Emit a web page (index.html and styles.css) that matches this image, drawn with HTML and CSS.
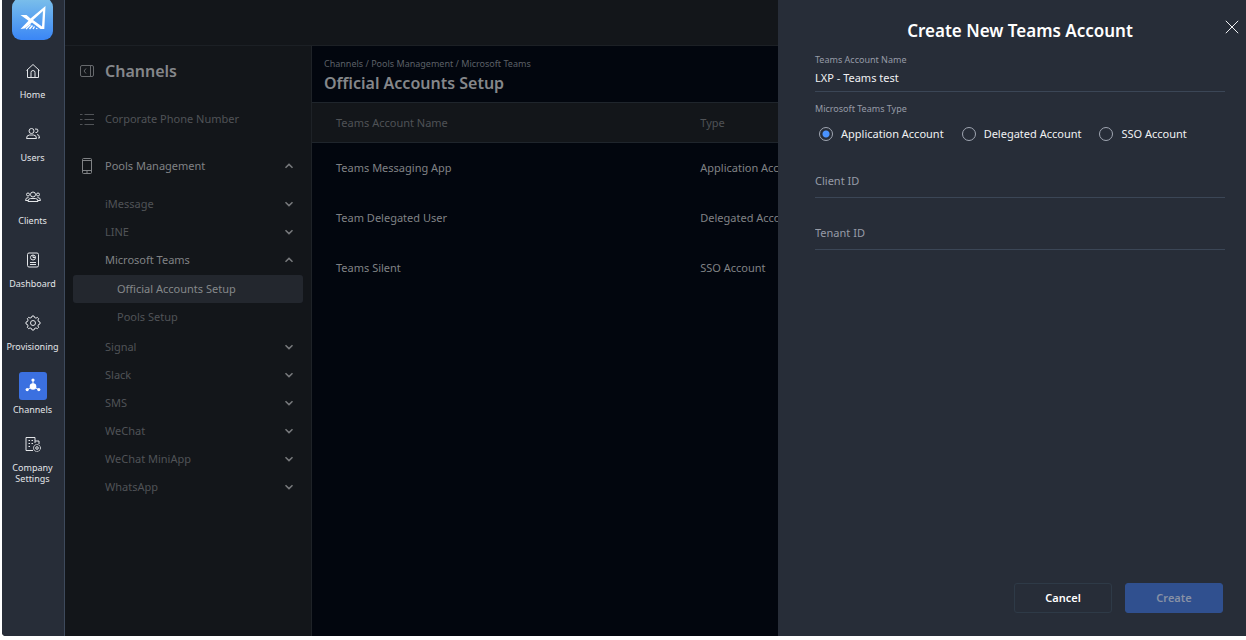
FILE: index.html
```html
<!DOCTYPE html>
<html lang="en">
<head>
<meta charset="utf-8">
<title>Official Accounts Setup</title>
<link rel="stylesheet" href="styles.css">
</head>
<body>
<svg class="sprite" aria-hidden="true">
  <symbol id="down" viewBox="0 0 10 6"><path d="M1.500 1.200 5 4.600 8.500 1.200"/></symbol>
  <symbol id="up" viewBox="0 0 10 6"><path d="M1.500 4.800 5 1.400 8.500 4.800"/></symbol>
</svg>
<div class="app">
  <nav class="rail" aria-label="Main">
    <a class="logo" href="#" aria-label="Main page">
      <svg width="41" height="40" viewBox="0 0 41 40">
        <defs><linearGradient id="sky" x1="0" y1="0" x2="0" y2="1"><stop offset="0" stop-color="#7cc0ea"/><stop offset="1" stop-color="#3a86f6"/></linearGradient></defs>
        <rect y="-2" width="41" height="42" rx="9" fill="url(#sky)"/>
        <path d="M8.500 15H14.500L18.500 18.500 33.500 6 32.300 29H28.500L20 22.500 12.500 28.500 8.500 29 16.500 20.800ZM31 11 21 20 30 26.500Z" fill="#fff" fill-rule="evenodd"/>
        <path d="M14 29 18.500 24.500M17.500 29 20.500 25.500M21 29 22.500 26.500M24.500 29 25 28" stroke="#fff" stroke-width="1.400"/>
      </svg>
    </a>
    <a class="rail-item" href="#"><span class="rail-icon"><svg width="16" height="16" viewBox="0 0 16 16"><path d="M2.500 6.500V14.500H13.500V6.500M1.500 7.500 8 1.500 14.500 7.500M6 14.500V9.500Q6 7.500 8 7.500T10 9.500V14.500"/></svg></span>Home</a>
    <a class="rail-item" href="#"><span class="rail-icon"><svg width="16" height="16" viewBox="0 0 16 16"><circle cx="6.500" cy="5" r="2.500"/><path d="M1.500 12.500Q1.500 9 4.500 9H8.500Q11.500 9 11.500 12.500ZM10 3Q13.500 2.500 13 5 12.500 7 10.500 6.500M12 8.500Q14.500 8.500 14.500 12H13"/></svg></span>Users</a>
    <a class="rail-item" href="#"><span class="rail-icon"><svg width="18" height="16" viewBox="0 0 18 16"><circle cx="9" cy="5.500" r="2.500"/><circle cx="4" cy="5.500" r="1.500"/><circle cx="14" cy="5.500" r="1.500"/><path d="M4 12.500Q4 9.500 6.500 9.500H11.500Q14 9.500 14 12.500ZM4 11.500H1.500Q1.500 8.500 4.500 8.500M14 11.500H16.500Q16.500 8.500 13.500 8.500"/></svg></span>Clients</a>
    <a class="rail-item" href="#"><span class="rail-icon"><svg width="16" height="16" viewBox="0 0 16 16"><rect x="2.500" y="1" width="11" height="14" rx="1.500"/><circle cx="8" cy="5.500" r="2.500"/><path d="M8 5.500V3M8 5.500H10.500M5 10.500H11M5 12.500H11"/></svg></span>Dashboard</a>
    <a class="rail-item" href="#"><span class="rail-icon"><svg width="16" height="16" viewBox="0 0 16 16"><circle cx="8" cy="8" r="2.500"/><path d="M6.500 2.500 7 1H9L9.500 2.500 11 3.200 12.400 2.400 13.700 3.700 12.900 5 13.500 6.500 15 7V9L13.500 9.500 12.900 11 13.700 12.300 12.300 13.700 11 12.900 9.500 13.500 9 15H7L6.500 13.500 5 12.900 3.700 13.700 2.300 12.300 3.100 11 2.500 9.500 1 9V7L2.500 6.500 3.100 5 2.300 3.700 3.700 2.300 5 3.100Z"/></svg></span>Provisioning</a>
    <a class="rail-item" href="#" aria-current="page"><span class="rail-icon"><svg width="16" height="16" viewBox="0 0 16 16"><path d="M8 2V8L2 12M8 8 14 12"/><g fill="#fff" stroke="none"><circle cx="8" cy="8.500" r="3.300"/><circle cx="8" cy="2" r="1.600"/><circle cx="2.200" cy="11.600" r="1.600"/><circle cx="13.800" cy="11.600" r="1.600"/></g></svg></span>Channels</a>
    <a class="rail-item" href="#"><span class="rail-icon"><svg width="16" height="16" viewBox="0 0 16 16"><path d="M8 14.500H1V1.500H10V7M10 5H14V8M3.500 4.500H5M6.500 4.500H8M3.500 7.500H5M6.500 7.500H8M3.500 10.500H5"/><circle cx="12" cy="12" r="3.500" stroke-dasharray="1.600 .6"/><circle cx="12" cy="12" r="1.300"/></svg></span>Company<br>Settings</a>
  </nav>

  <div class="page">
    <header class="topbar"></header>
    <div class="columns">
      <aside class="sidebar">
        <h2 class="side-title"><svg width="14" height="12" viewBox="0 0 14 12"><rect x=".5" y=".5" width="13" height="11" rx="1.500"/><path d="M10.500.5V11.500M6 3.500 4 6 6 8.500"/></svg>Channels</h2>
        <a class="side-link" href="#"><svg width="14" height="12" viewBox="0 0 14 12"><path d="M0 1.500H2.500M4.500 1.500H14M0 6.500H2.500M4.500 6.500H14M0 11.500H2.500M4.500 11.500H14"/></svg>Corporate Phone Number</a>
        <button class="side-link open" aria-expanded="true"><svg width="14" height="16" viewBox="0 0 14 16"><rect x="2.500" y=".5" width="9" height="15" rx="1"/><path d="M2.500 2.500H11.500M2.500 12.500H11.500M6 14H8"/></svg>Pools Management<svg class="chev" width="10" height="6"><use href="#up"/></svg></button>
        <ul class="tree">
          <li><button class="tree-row">iMessage<svg class="chev" width="10" height="6"><use href="#down"/></svg></button></li>
          <li><button class="tree-row">LINE<svg class="chev" width="10" height="6"><use href="#down"/></svg></button></li>
          <li><button class="tree-row open" aria-expanded="true">Microsoft Teams<svg class="chev" width="10" height="6"><use href="#up"/></svg></button>
            <ul class="subtree">
              <li><a class="tree-row leaf" href="#" aria-current="page">Official Accounts Setup</a></li>
              <li><a class="tree-row leaf" href="#">Pools Setup</a></li>
            </ul>
          </li>
          <li><button class="tree-row">Signal<svg class="chev" width="10" height="6"><use href="#down"/></svg></button></li>
          <li><button class="tree-row">Slack<svg class="chev" width="10" height="6"><use href="#down"/></svg></button></li>
          <li><button class="tree-row">SMS<svg class="chev" width="10" height="6"><use href="#down"/></svg></button></li>
          <li><button class="tree-row">WeChat<svg class="chev" width="10" height="6"><use href="#down"/></svg></button></li>
          <li><button class="tree-row">WeChat MiniApp<svg class="chev" width="10" height="6"><use href="#down"/></svg></button></li>
          <li><button class="tree-row">WhatsApp<svg class="chev" width="10" height="6"><use href="#down"/></svg></button></li>
        </ul>
      </aside>
      <main class="content">
        <div class="heading">
          <div class="crumbs">Channels / Pools Management / Microsoft Teams</div>
          <h1>Official Accounts Setup</h1>
        </div>
        <table class="accounts">
          <thead><tr><th class="name">Teams Account Name</th><th>Type</th></tr></thead>
          <tbody>
            <tr><td>Teams Messaging App</td><td>Application Account</td></tr>
            <tr><td>Team Delegated User</td><td>Delegated Account</td></tr>
            <tr><td>Teams Silent</td><td>SSO Account</td></tr>
          </tbody>
        </table>
      </main>
    </div>
  </div>

  <form class="drawer" role="dialog" aria-labelledby="drawer-title">
    <button class="close" type="button" aria-label="Close"><svg width="14" height="14" viewBox="0 0 14 14"><path d="M.8.8 13.200 13.200M13.200.8.8 13.200"/></svg></button>
    <h2 class="drawer-title" id="drawer-title">Create New Teams Account</h2>
    <div class="field">
      <label for="account-name">Teams Account Name</label>
      <input id="account-name" type="text" value="LXP - Teams test">
    </div>
    <fieldset class="types">
      <legend>Microsoft Teams Type</legend>
      <div class="options">
        <label><input type="radio" name="type" checked>Application Account</label>
        <label><input type="radio" name="type">Delegated Account</label>
        <label><input type="radio" name="type">SSO Account</label>
      </div>
    </fieldset>
    <input class="line-input" type="text" placeholder="Client ID" aria-label="Client ID">
    <input class="line-input" type="text" placeholder="Tenant ID" aria-label="Tenant ID">
    <div class="actions">
      <button class="btn" type="button">Cancel</button>
      <button class="btn primary" type="submit" disabled>Create</button>
    </div>
  </form>
</div>
</body>
</html>
```
FILE: styles.css
```css
* { box-sizing: border-box; }
body {
  margin: 0;
  background: #fff;
  font: 11px/16px "Noto Sans", sans-serif;
}
button, input { font: inherit; color: inherit; }
button { background: none; border: 0; padding: 0; }
a { color: inherit; text-decoration: none; }
h1, h2 { margin: 0; font-size: 16px; line-height: 22px; font-weight: 600; }
ul { list-style: none; margin: 0; padding: 0; }
svg { fill: none; stroke: currentColor; flex: none; }
.sprite { display: none; }

.app {
  position: relative;
  display: flex;
  height: calc(100vh - 4px);
  margin: 0 0 4px 2px;
  overflow: hidden;
  border-bottom-left-radius: 4px;
  background: #13161a;
}

/* Icon rail */
.rail {
  width: 63px;
  flex: none;
  display: flex;
  flex-direction: column;
  padding-right: 1px;
  background: #272d38;
  border-right: 1px solid #3e4a5c;
  color: #e3e5e8;
}
.logo { display: flex; justify-content: center; height: 47px; }
.logo svg { stroke: none; }
.rail-item {
  height: 63px;
  flex: none;
  display: flex;
  flex-direction: column;
  align-items: center;
  justify-content: center;
  font-size: 9px;
  line-height: 11px;
  text-align: center;
}
.rail-icon {
  width: 28px;
  height: 28px;
  margin-bottom: 4px;
  display: grid;
  place-items: center;
  border-radius: 3px;
}
.rail-item[aria-current] .rail-icon { background: #3b70e0; color: #fff; }

/* Page behind the drawer */
.page { flex: 1; min-width: 0; display: flex; flex-direction: column; }
.topbar { height: 46px; border-bottom: 1px solid #1c2025; }
.columns { flex: 1; display: flex; min-height: 0; }
.sidebar {
  width: 247px;
  flex: none;
  padding: 0 8px;
  border-right: 1px solid #1e2227;
  color: #505357;
}
.side-title, .side-link {
  display: flex;
  align-items: center;
  gap: 11px;
  width: 100%;
  padding: 0 9px 0 7px;
  text-align: left;
}
.side-title { height: 50px; color: #85878a; }
.side-title svg { color: #66696c; }
.side-link { height: 46px; }
.side-link.open { height: 48px; }
.side-link.open, .tree-row.open { color: #808285; }
.chev { margin-left: auto; color: #77797c; stroke-width: 1.5px; }
.tree-row {
  display: flex;
  align-items: center;
  width: 100%;
  height: 28px;
  padding: 0 9px 0 32px;
  border-radius: 3px;
  text-align: left;
}
.subtree { padding: 1px 0 2px; }
.leaf { padding-left: 44px; }
.leaf[aria-current] { background: #23272e; color: #85878a; }

.content { flex: 1; min-width: 0; background: #02060e; }
.heading { height: 56px; padding: 10px 12px; color: #85878a; }
.crumbs { font-size: 9px; line-height: 15px; color: #5c6067; }
.heading h1 { line-height: 24px; }
.accounts { width: 100%; table-layout: fixed; border-collapse: collapse; }
.accounts th, .accounts td { padding: 0 24px; text-align: left; font-weight: 400; }
.accounts .name { width: 39%; }
.accounts th {
  height: 40px;
  background: #13161a;
  border-top: 1px solid #1f252c;
  border-bottom: 1px solid #1f252c;
  color: #4f5256;
}
.accounts td { height: 50px; color: #808285; }

/* Drawer */
.drawer {
  position: absolute;
  top: 0;
  right: 0;
  bottom: 0;
  width: min(468px, 100%);
  display: flex;
  flex-direction: column;
  padding: 20px 21px 23px 37px;
  background: #272d38;
  color: #f0f1f3;
}
.close { position: absolute; top: 20px; right: 7px; width: 14px; height: 14px; display: flex; }
.drawer-title { font-size: 17px; text-align: center; color: #fff; }
.field { display: flex; flex-direction: column; padding-top: 11px; }
.field label, .types legend { font-size: 9px; line-height: 14px; color: #969ba7; padding: 0; }
.field input, .line-input {
  width: 100%;
  padding: 0;
  background: none;
  border: 0;
  border-bottom: 1px solid #3b4656;
  border-radius: 0;
}
.field input { height: 25px; padding-bottom: 4px; }
.types { margin: 0; padding: 0; border: 0; min-width: 0; }
.types legend { padding-top: 10px; }
.options { display: flex; flex-wrap: wrap; gap: 18px; padding: 10px 4px 0; }
.options label { display: flex; align-items: center; gap: 8px; }
.options input {
  appearance: none;
  width: 14px;
  height: 14px;
  margin: 0;
  border: 1px solid #a0a6b2;
  border-radius: 50%;
}
.options input:checked { background: radial-gradient(circle, #4a93ff 3px, transparent 4px); }
.line-input { height: 52px; flex: none; padding-top: 18px; }
.types + .line-input { margin-top: 4px; }
.line-input::placeholder { color: #969ba7; opacity: 1; }
.actions { display: flex; justify-content: flex-end; gap: 13px; margin-top: auto; padding-right: 2px; }
.btn {
  width: 98px;
  height: 30px;
  border: 1px solid #2e3a47;
  border-radius: 3px;
  font-weight: 600;
  color: #fff;
}
.btn.primary { background: #30508f; border-color: #30508f; color: #8791a5; }
```
